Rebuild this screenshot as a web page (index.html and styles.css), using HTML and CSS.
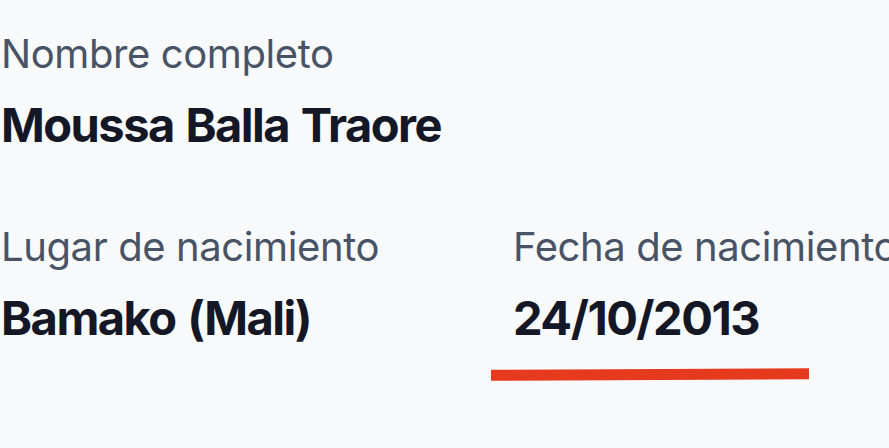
FILE: index.html
```
<!DOCTYPE html>
<html lang="es">
<head>
<meta charset="utf-8">
<link rel="stylesheet" href="styles.css">
</head>
<body>
<main class="card">
  <section class="field">
    <div class="label">Nombre completo</div>
    <div class="value">Moussa Balla Traore</div>
  </section>
  <div class="row">
    <section class="field col-first">
      <div class="label">Lugar de nacimiento</div>
      <div class="value">Bamako (Mali)</div>
    </section>
    <section class="field col-second">
      <div class="label">Fecha de nacimiento</div>
      <div class="value">24/10/2013</div>
      <div class="mark"></div>
    </section>
  </div>
</main>
</body>
</html>
```
FILE: styles.css
```
html, body {
  margin: 0;
  padding: 0;
  background: #f8f9fb;
  overflow: hidden;
}
body {
  width: 889px;
  height: 448px;
  font-family: Inter, "Noto Sans", sans-serif;
}
.card {
  padding: 28px 0 0 1px;
}
.label {
  font-size: 40px;
  line-height: 52px;
  font-weight: 400;
  color: #485466;
  white-space: nowrap;
  letter-spacing: -0.4px;
}
.value {
  font-size: 47px;
  line-height: 60px;
  font-weight: 700;
  color: #141726;
  white-space: nowrap;
  margin-top: 15px;
  letter-spacing: -1.5px;
  word-spacing: 2px;
}
.row {
  display: grid;
  grid-template-columns: 512px 1fr;
  margin-top: 66px;
}
.mark {
  width: 318px;
  height: 11px;
  background: #e63a1f;
  margin: 21px 0 0 -22px;
  transform: rotate(-0.3deg);
}
```
